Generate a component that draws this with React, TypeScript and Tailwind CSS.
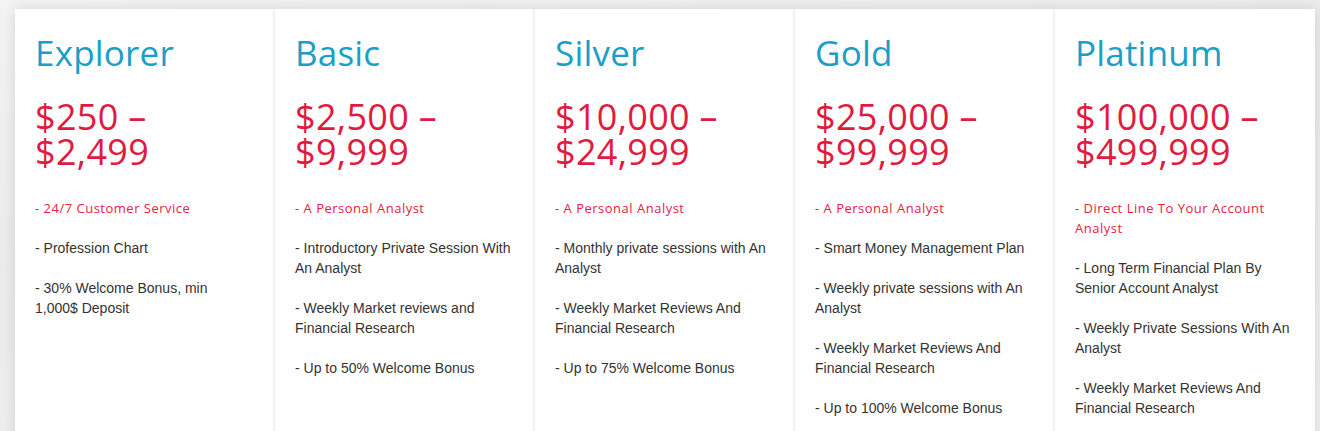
import React from "react";

type Plan = { name: string; p1: string; p2: string; highlight: string; items: string[] };

const plans: Plan[] = [
  { name: "Explorer", p1: "$250 –", p2: "$2,499", highlight: "24/7 Customer Service", items: ["Profession Chart", "30% Welcome Bonus, min 1,000$ Deposit"] },
  { name: "Basic", p1: "$2,500 –", p2: "$9,999", highlight: "A Personal Analyst", items: ["Introductory Private Session With An Analyst", "Weekly Market reviews and Financial Research", "Up to 50% Welcome Bonus"] },
  { name: "Silver", p1: "$10,000 –", p2: "$24,999", highlight: "A Personal Analyst", items: ["Monthly private sessions with An Analyst", "Weekly Market Reviews And Financial Research", "Up to 75% Welcome Bonus"] },
  { name: "Gold", p1: "$25,000 –", p2: "$99,999", highlight: "A Personal Analyst", items: ["Smart Money Management Plan", "Weekly private sessions with An Analyst", "Weekly Market Reviews And Financial Research", "Up to 100% Welcome Bonus"] },
  { name: "Platinum", p1: "$100,000 –", p2: "$499,999", highlight: "Direct Line To Your Account Analyst", items: ["Long Term Financial Plan By Senior Account Analyst", "Weekly Private Sessions With An Analyst", "Weekly Market Reviews And Financial Research"] },
];

export default function App() {
  return (
    <div className="w-[1320px] h-[431px] overflow-hidden bg-[linear-gradient(170deg,#f3f3f3,#ebebeb_40%,#f1f1f1)] pl-[15px] pr-[5px] pt-[9px]">
      <div className="grid grid-cols-5 bg-white h-[460px] shadow-[0_0_12px_rgba(0,0,0,0.12)]">
        {plans.map((p, i) => (
          <div key={p.name} className={`pl-[20px] pt-[22px] ${i < 4 ? "border-r-2 border-[#f2f2f2]" : ""}`}>
            <div className="w-[218px]">
              <h2 className="text-[#1aa0c6] text-[35px] leading-[44px] font-['Open_Sans',sans-serif] font-normal tracking-[0.2px]">{p.name}</h2>
              <div className="mt-[24px] text-[#e11b3f] text-[36px] leading-[35px] font-['Open_Sans',sans-serif] tracking-[0.3px]">
                <div>{p.p1}</div>
                <div>{p.p2}</div>
              </div>
              <div className="mt-[29px] text-[14px] leading-[20px] text-[#333] font-['Liberation_Sans',Arial,sans-serif]">
                <p className="mb-[20px] text-[#e8213f] text-[13px] tracking-[0.5px] font-['Open_Sans',sans-serif]">- {p.highlight}</p>
                {p.items.map((it) => (
                  <p key={it} className="mb-[20px]">- {it}</p>
                ))}
              </div>
            </div>
          </div>
        ))}
      </div>
    </div>
  );
}
